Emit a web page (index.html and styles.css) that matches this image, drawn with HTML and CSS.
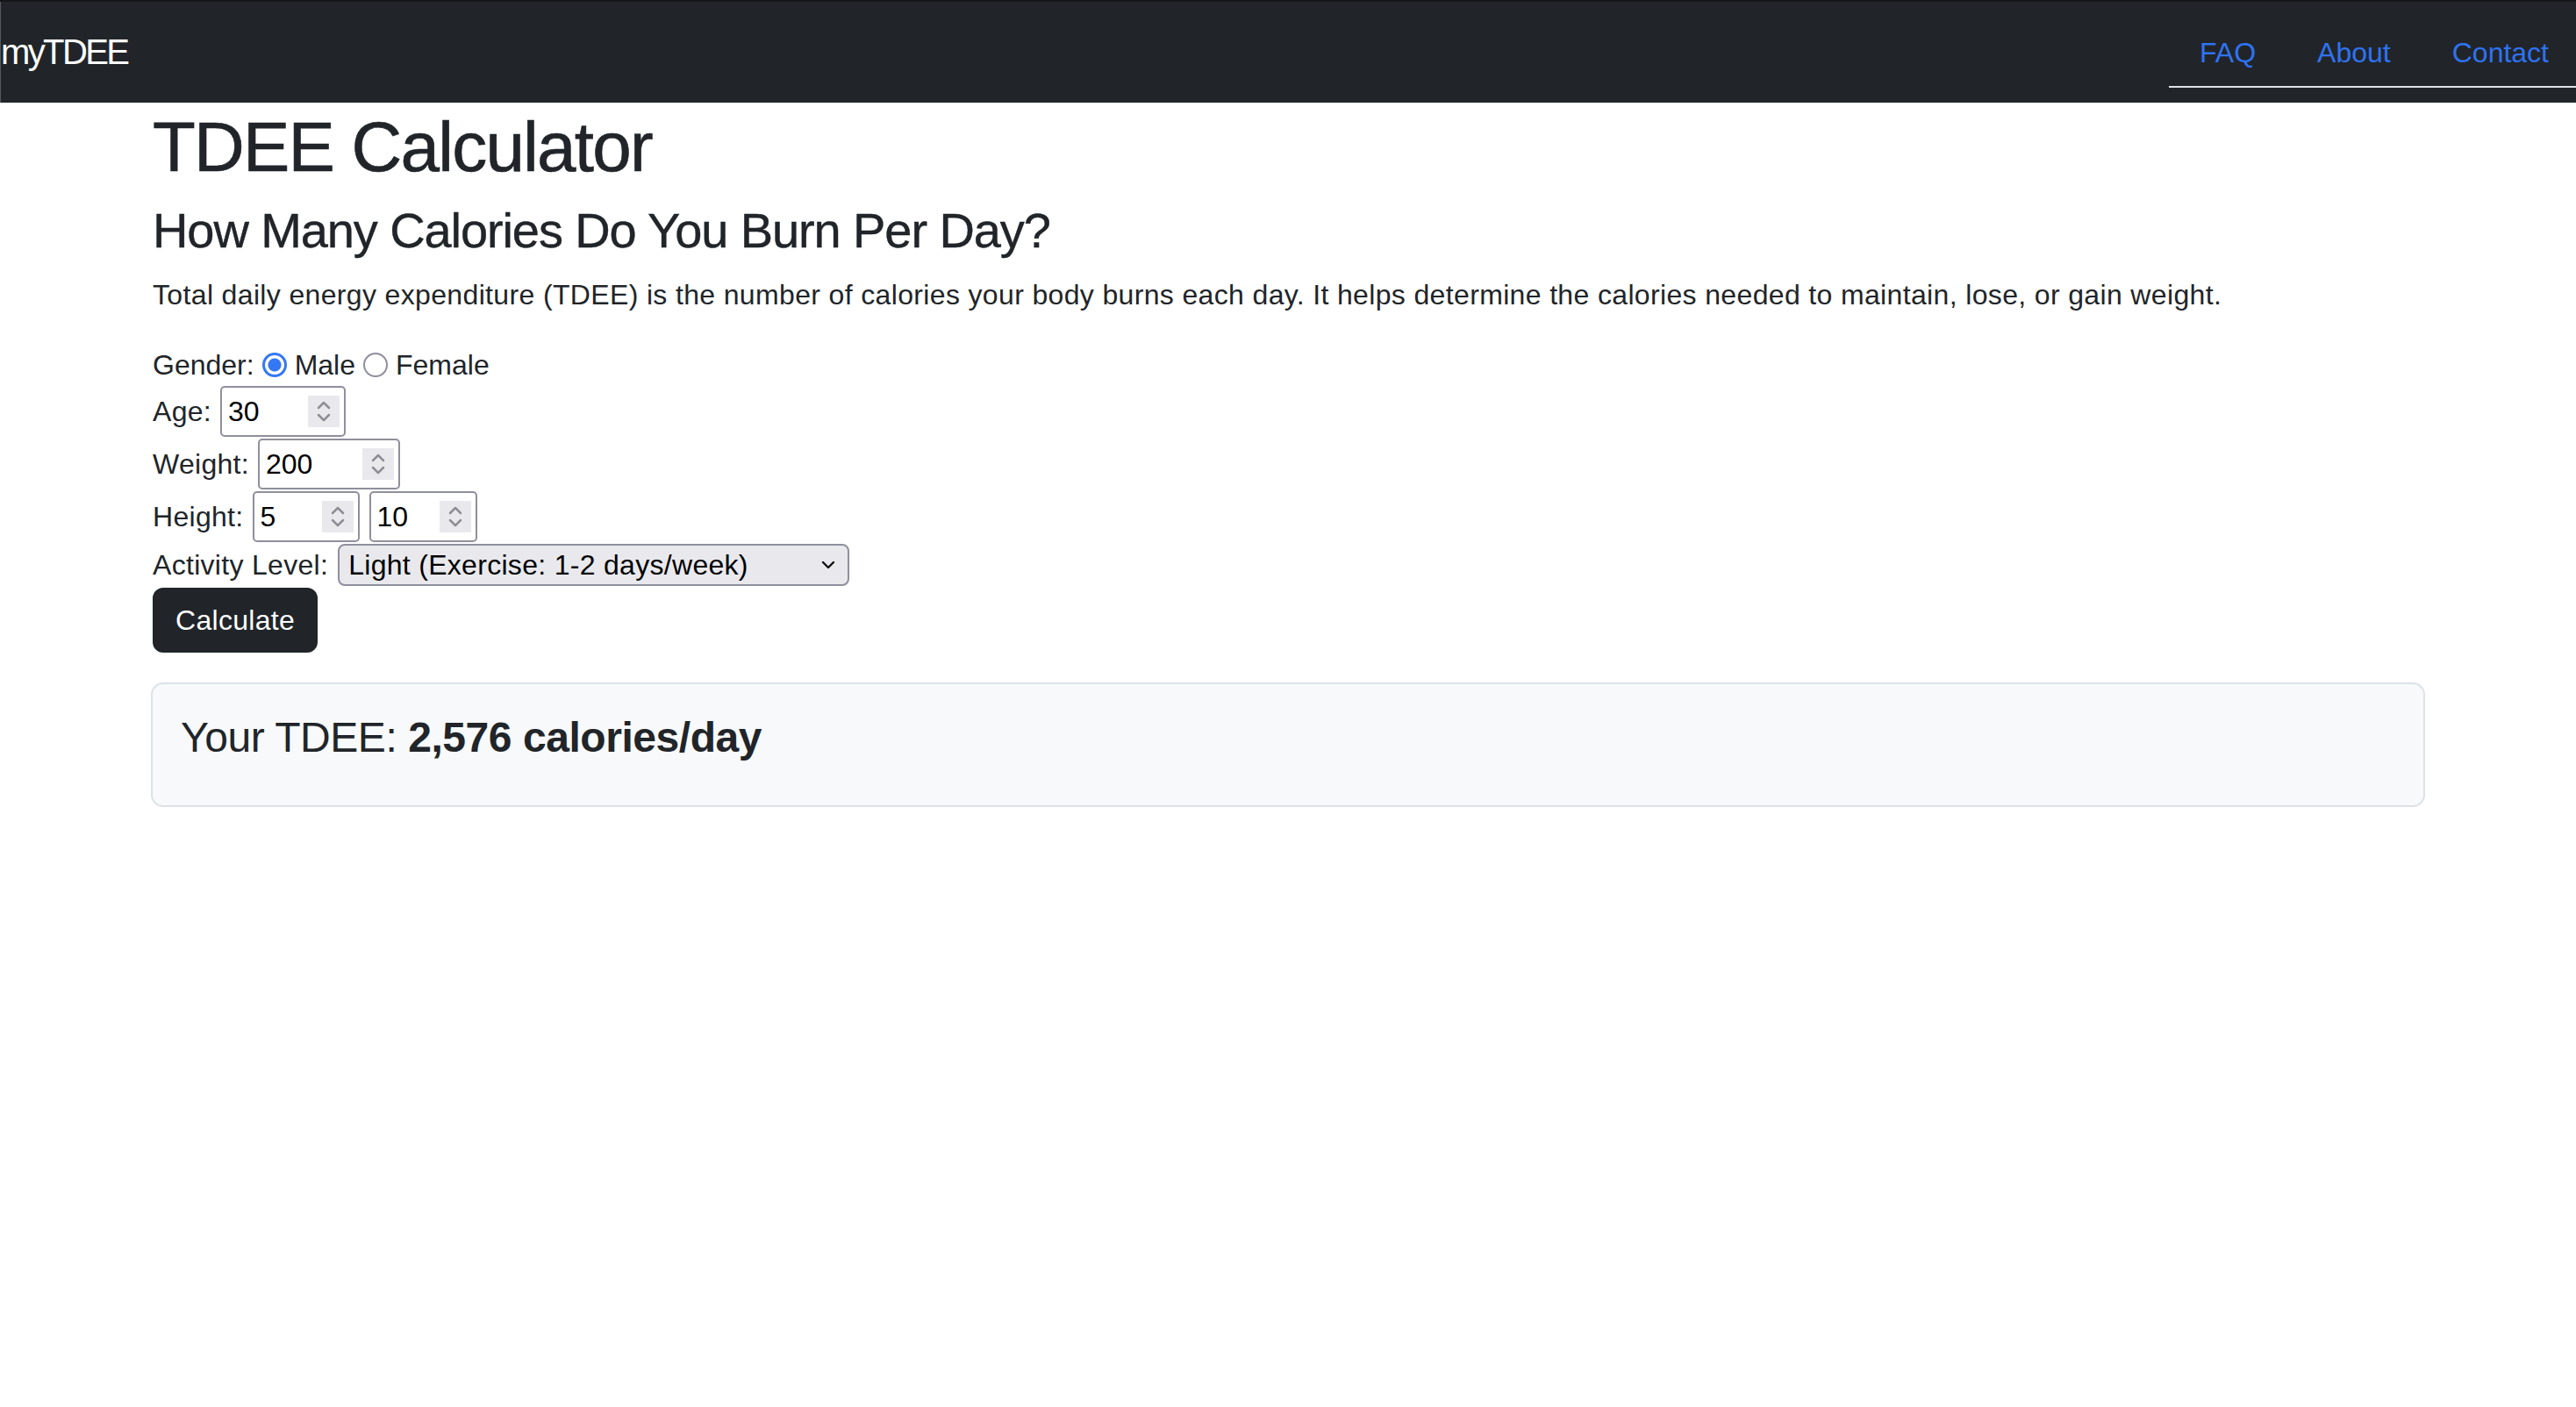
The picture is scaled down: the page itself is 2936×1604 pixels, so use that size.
FILE: index.html
```html
<!DOCTYPE html>
<html lang="en">
<head>
<meta charset="utf-8">
<title>myTDEE - TDEE Calculator</title>
<link rel="stylesheet" href="styles.css">
</head>
<body>
<nav class="navbar">
  <a class="brand" href="#">myTDEE</a>
  <ul class="nav-links">
    <li><a href="#">FAQ</a></li>
    <li><a href="#">About</a></li>
    <li class="last"><a href="#">Contact</a></li>
  </ul>
</nav>
<main class="container">
  <h1 class="title">TDEE Calculator</h1>
  <h3 class="subtitle">How Many Calories Do You Burn Per Day?</h3>
  <p class="lead">Total daily energy expenditure (TDEE) is the number of calories your body burns each day. It helps determine the calories needed to maintain, lose, or gain weight.</p>
  <form class="calc">
    <div class="row row-gender">
      <span>Gender:</span>
      <input class="radio" type="radio" name="gender" checked>
      <span>Male</span>
      <input class="radio" type="radio" name="gender">
      <span>Female</span>
    </div>
    <div class="row row-input">
      <span>Age:</span>
      <span class="num w-age"><input type="text" value="30"><span class="spin"><svg width="36" height="36" viewBox="0 0 36 36"><polyline points="12,14 18,8 24,14"/><polyline points="12,22 18,28 24,22"/></svg></span></span>
    </div>
    <div class="row row-input">
      <span>Weight:</span>
      <span class="num w-weight"><input type="text" value="200"><span class="spin"><svg width="36" height="36" viewBox="0 0 36 36"><polyline points="12,14 18,8 24,14"/><polyline points="12,22 18,28 24,22"/></svg></span></span>
    </div>
    <div class="row row-input row-height">
      <span>Height:</span>
      <span class="num w-ft"><input type="text" value="5"><span class="spin"><svg width="36" height="36" viewBox="0 0 36 36"><polyline points="12,14 18,8 24,14"/><polyline points="12,22 18,28 24,22"/></svg></span></span>
      <span class="num w-in"><input type="text" value="10"><span class="spin"><svg width="36" height="36" viewBox="0 0 36 36"><polyline points="12,14 18,8 24,14"/><polyline points="12,22 18,28 24,22"/></svg></span></span>
    </div>
    <div class="row row-select">
      <span>Activity Level:</span>
      <span class="select">
        <select>
          <option>Sedentary (Little or no exercise)</option>
          <option selected>Light (Exercise: 1-2 days/week)</option>
          <option>Moderate (Exercise: 3-5 days/week)</option>
          <option>Active (Exercise: 6-7 days/week)</option>
        </select>
        <svg class="caret" width="16" height="10" viewBox="0 0 16 10"><polyline points="2,2 8,8 14,2"/></svg>
      </span>
    </div>
    <button type="button" class="btn">Calculate</button>
  </form>
  <div class="result">
    <h4 class="result-text">Your TDEE: <strong>2,576 calories/day</strong></h4>
  </div>
</main>
</body>
</html>
```
FILE: styles.css
```css
html, body {
  margin: 0;
  padding: 0;
  background: #fff;
}
body {
  font-family: "Liberation Sans", Arial, Helvetica, sans-serif;
  font-size: 32px;
  line-height: 1.5;
  color: #212529;
}

/* Navbar */
.navbar {
  display: flex;
  align-items: flex-start;
  height: 117px;
  box-sizing: border-box;
  padding: 22px 0 0 0;
  background: #212529;
  box-shadow: inset 0 2px 0 #141517, inset 1px 0 0 #55585c;
}
.brand {
  display: block;
  margin-top: 7px;
  padding-left: 1px;
  font-size: 40px;
  line-height: 60px;
  letter-spacing: -2.6px;
  color: #fff;
  text-decoration: none;
}
.nav-links {
  display: flex;
  list-style: none;
  margin: 0 0 0 auto;
  padding: 0;
  border-bottom: 2px solid #dee2e6;
}
.nav-links li {
  padding: 14px 35px;
}
.nav-links li.last {
  padding-right: 31px;
}
.nav-links a {
  display: block;
  font-size: 32px;
  line-height: 48px;
  color: #2f73f0;
  text-decoration: none;
}

/* Content */
.container {
  max-width: 2640px;
  box-sizing: border-box;
  margin: 0 auto;
  padding: 0 24px 0 26px;
}
.title {
  margin: 3px 0 13px;
  font-size: 80px;
  font-weight: 500;
  line-height: 1.2;
  letter-spacing: -1.8px;
  -webkit-text-stroke: 0.6px #212529;
}
.subtitle {
  margin: 0 0 16px;
  font-size: 56px;
  font-weight: 500;
  line-height: 1.2;
  letter-spacing: -1.1px;
  -webkit-text-stroke: 0.4px #212529;
}
.lead {
  margin: 0 0 32px;
  letter-spacing: 0.35px;
}

/* Form */
.calc {
  margin: 0;
  letter-spacing: 0.3px;
}
.row {
  display: flex;
  align-items: center;
  gap: 10px;
}
.row-gender {
  height: 47px;
  gap: 9px;
  letter-spacing: 0;
}
.row-input {
  height: 60px;
}
.row-height .num + .num {
  margin-left: 1px;
}
.row-select {
  height: 50px;
  gap: 11px;
}
.radio {
  appearance: none;
  -webkit-appearance: none;
  margin: 0;
  width: 28px;
  height: 28px;
  box-sizing: border-box;
  border: 2px solid #8f8f9d;
  border-radius: 50%;
  background: #fff;
}
.radio:checked {
  border: 3px solid #3478f6;
  background: radial-gradient(circle, #3478f6 0 7px, #fff 8px);
}
.num {
  display: inline-flex;
  align-items: center;
  height: 58px;
  box-sizing: border-box;
  border: 2px solid #8f8f9d;
  border-radius: 5px;
  padding: 0 5px 0 7px;
  background: #fff;
}
.num input {
  border: 0;
  outline: 0;
  padding: 0;
  margin: 0;
  background: transparent;
  font: inherit;
  line-height: 48px;
  height: 48px;
  color: #000;
}
.w-age input { width: 91px; }
.w-weight input { width: 110px; }
.w-ft input { width: 70px; }
.w-in input { width: 71px; }
.spin {
  display: block;
  width: 36px;
  height: 36px;
  background: #e9e9ed;
}
.spin svg {
  display: block;
  fill: none;
  stroke: #8e8e96;
  stroke-width: 2.5;
  stroke-linecap: round;
  stroke-linejoin: round;
}
.select {
  display: inline-flex;
  align-items: center;
  width: 583px;
  height: 48px;
  box-sizing: border-box;
  border: 2px solid #8f8f9d;
  border-radius: 8px;
  background: #e9e9ed;
  padding: 0 14px 0 0;
}
.select select {
  appearance: none;
  -webkit-appearance: none;
  flex: 1;
  min-width: 0;
  border: 0;
  outline: 0;
  margin: 0;
  padding: 0 0 0 10px;
  background: transparent;
  font: inherit;
  letter-spacing: 0.3px;
  line-height: 44px;
  height: 44px;
  color: #000;
}
.caret {
  display: block;
  fill: none;
  stroke: #111;
  stroke-width: 2.4;
  stroke-linecap: round;
  stroke-linejoin: round;
}
.btn {
  display: block;
  margin-top: 1px;
  height: 74px;
  box-sizing: border-box;
  padding: 0 24px;
  border: 2px solid #212529;
  border-radius: 12px;
  background: #212529;
  color: #fff;
  font-family: inherit;
  font-size: 32px;
  letter-spacing: 0.3px;
  line-height: 48px;
}

/* Result */
.result {
  margin-top: 34px;
  margin-left: -2px;
  border: 2px solid #dee2e6;
  border-radius: 14px;
  background: #f8f9fa;
  padding: 32px;
}
.result-text {
  margin: 0 0 16px;
  font-size: 48px;
  font-weight: 500;
  line-height: 1.2;
  letter-spacing: -0.45px;
}
.result-text strong {
  font-weight: 700;
}
```
